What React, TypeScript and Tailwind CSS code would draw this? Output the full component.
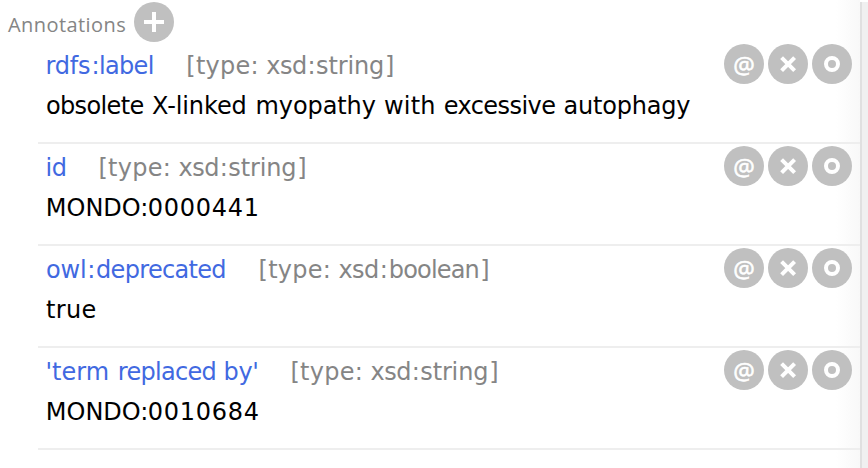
// A run of glyphs: text, left edge, tracking in pixels.
type Run = [string, number, number];
type Tone = "text-[#4169e1]" | "text-[#858585]" | "text-black";

const stringType: Run[] = [["[type: ", 0, 0.26], ["xsd", 80, -0.5], [":", 121.3, 0], ["string", 129.8, -0.15], ["]", 198.7, 0]];
const booleanType: Run[] = [["[type: ", 0, 0.26], ["xsd", 79.8, -0.5], [":", 121.2, 0], ["boolean", 130.2, -0.83], ["]", 221.7, 0]];

const rows: { name: Run[]; typeX: number; type: Run[]; value: Run[] }[] = [
  {
    name: [["rdfs", 45.6, -0.2], [":", 91.6, 0], ["label", 99, -0.66]],
    typeX: 186.3,
    type: stringType,
    value: [["obsolete ", 45.9, -0.61], ["X-linked ", 152, -0.1], ["myopathy ", 255.5, -0.08], ["with ", 384, 0.2], ["excessive ", 443.7, -0.55], ["autophagy", 563.6, -0.2]],
  },
  {
    name: [["id", 45.5, -0.5]],
    typeX: 98.5,
    type: stringType,
    value: [["MONDO:", 45.8, 0], ["0000441", 147.7, 0.73]],
  },
  {
    name: [["owl", 46, -0.2], [":", 87.2, 0], ["deprecated", 96, -0.67]],
    typeX: 258.6,
    type: booleanType,
    value: [["true", 46, 0.3]],
  },
  {
    name: [["'term ", 45.5, 0], ["replaced ", 117.8, -0.71], ["by'", 223.5, -0.3]],
    typeX: 290.5,
    type: stringType,
    value: [["MONDO:", 45.8, 0], ["0010684", 147.7, 0.73]],
  },
];

function Runs({ runs, start, end, tone }: { runs: Run[]; start: number; end?: number; tone: Tone }) {
  return (
    <span className={"flex shrink-0 " + tone} style={{ paddingLeft: runs[0][1] - start }}>
      {runs.map(([text, x, tracking], i) => {
        const next = i + 1 < runs.length ? runs[i + 1][1] : end;
        return (
          <span key={i} className="shrink-0" style={{ letterSpacing: tracking, width: next === undefined ? undefined : next - x }}>
            {text}
          </span>
        );
      })}
    </span>
  );
}

function Buttons() {
  return (
    <div className="flex gap-1 pt-[2px]">
      <button className="flex size-10 justify-center rounded-full bg-[#c0c0c0] pt-[2px] font-['Open_Sans',sans-serif] text-[24px] leading-[38px] text-white [-webkit-text-stroke:0.6px_white]">
        @
      </button>
      <button className="size-10 rounded-full bg-[#c0c0c0]">
        <svg className="size-10" viewBox="0 0 40 40">
          <path d="M13.6 13.6L26.6 26.6M26.6 13.6L13.6 26.6" stroke="#fff" strokeWidth="4" />
        </svg>
      </button>
      <button className="flex size-10 items-center justify-center rounded-full bg-[#c0c0c0]">
        <span className="size-4 rounded-full border-4 border-white" />
      </button>
    </div>
  );
}

export default function App() {
  return (
    <div className="flex h-[468px] w-[868px] overflow-hidden bg-white">
      <div className="w-[860px] bg-[linear-gradient(to_right,#ffffff_836px,#f8f8f8_860px)]">
        <div className="flex h-[42px] items-start pl-2">
          <h1 className="w-[126px] pt-[5px] font-['Open_Sans',sans-serif] text-[20px] leading-10 tracking-[0.42px] text-[#858585]">Annotations</h1>
          <button className="mt-[2px] size-10 rounded-full bg-[#c0c0c0]">
            <svg className="size-10" viewBox="0 0 40 40">
              <path d="M20 10V30M10 20H30" stroke="#fff" strokeWidth="4" />
            </svg>
          </button>
        </div>
        {rows.map((row, i) => (
          <div key={i} className="ml-[38px] flex h-[102px] justify-between border-b-2 border-[#eeeeee] pr-2">
            <div className="pt-1 font-['DejaVu_Sans',sans-serif] text-2xl leading-10 whitespace-pre">
              <div className="flex">
                <Runs runs={row.name} start={38} end={row.typeX} tone="text-[#4169e1]" />
                <Runs runs={row.type} start={0} tone="text-[#858585]" />
              </div>
              <Runs runs={row.value} start={38} tone="text-black" />
            </div>
            <Buttons />
          </div>
        ))}
      </div>
      <div className="mt-[2px] w-2 border-l-2 border-[#e0e0e0] bg-[#f0f0f0]" />
    </div>
  );
}
